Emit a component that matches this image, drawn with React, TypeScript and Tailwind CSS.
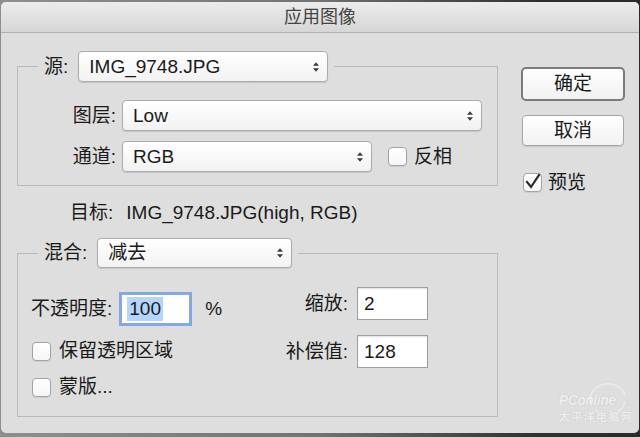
import React from "react";

function Arrows() {
  return (
    <svg width="8" height="12" viewBox="0 0 8 12" className="shrink-0">
      <path d="M4 1.2 L7 4.8 H1 Z M4 10.8 L7 7.2 H1 Z" fill="#3b3b3b" />
    </svg>
  );
}

function Popup({ size, text }: { size: string; text: string }) {
  return (
    <div
      className={`${size} flex items-center justify-between rounded-[4px] border border-[#ababab] bg-gradient-to-b from-[#ffffff] to-[#f2f2f2] pl-[10px] pr-[7px] text-[19px] leading-[22px] text-[#1a1a1a] shadow-[0_1px_1px_rgba(0,0,0,0.12)]`}
    >
      <span>{text}</span>
      <Arrows />
    </div>
  );
}

function CheckBox({ checked }: { checked?: boolean }) {
  return (
    <div className="relative flex h-[19px] w-[19px] shrink-0 items-center justify-center rounded-[4px] border border-[#a3a3a3] bg-gradient-to-b from-[#ffffff] to-[#f6f6f6] shadow-[0_1px_1px_rgba(0,0,0,0.08)]">
      {checked && (
        <svg width="19" height="19" viewBox="0 0 19 19" className="absolute left-[-1px] top-[-2px]">
          <path d="M4 10 L8 15 L16 3" stroke="#2a2a2a" strokeWidth="2.2" fill="none" strokeLinecap="square" strokeLinejoin="miter" />
        </svg>
      )}
    </div>
  );
}

function Field({ text }: { text: string }) {
  return (
    <div className="flex h-[33px] w-[71px] items-center border border-[#9d9d9d] bg-white pl-[6px] text-[19px] leading-[22px] text-[#1a1a1a] shadow-[inset_0_1px_1px_rgba(0,0,0,0.12)]">
      {text}
    </div>
  );
}

export default function App() {
  return (
    <div className="h-[437px] w-[640px] overflow-hidden bg-[linear-gradient(90deg,#8e8e8e_0%,#727272_50%,#303030_84%,#2a2a2a_100%)] pl-[1px] pt-[2px] font-['Liberation_Sans','Noto_Sans_CJK_SC',sans-serif] text-[#1a1a1a]">
      <div className="relative flex h-[431px] w-[638px] flex-col overflow-hidden rounded-[5px] bg-[#dedede]">
        {/* title bar */}
        <div className="flex h-[31px] shrink-0 items-center justify-center border-b border-[#b2b2b2] bg-gradient-to-b from-[#ececec] to-[#d6d6d6] text-[18px] leading-[22px] text-[#444444]">
          应用图像
        </div>

        <div className="flex">
          {/* left column */}
          <div className="w-[497px] shrink-0 pl-[16px] pt-[18px]">
            <fieldset className="w-[481px] border border-[#b9b9b9] pb-[13px]">
              <legend className="ml-[20px] px-[6px]">
                <div className="flex items-center gap-[10px] text-[19px] leading-[22px]">
                  <span>源:</span>
                  <Popup size="h-[31px] w-[250px]" text="IMG_9748.JPG" />
                </div>
              </legend>
              <div className="mt-[18px] flex flex-col gap-[10px] text-[19px] leading-[22px]">
                <div className="flex items-center gap-[6px]">
                  <span className="w-[98px] text-right">图层:</span>
                  <Popup size="h-[31px] w-[360px]" text="Low" />
                </div>
                <div className="flex items-center gap-[6px]">
                  <span className="w-[98px] text-right">通道:</span>
                  <Popup size="h-[31px] w-[250px]" text="RGB" />
                  <div className="ml-[10px] flex items-center gap-[7px]">
                    <CheckBox />
                    <span>反相</span>
                  </div>
                </div>
              </div>
            </fieldset>

            <div className="ml-[53px] mt-[15px] flex text-[19px] leading-[24px]">
              <span>目标:</span>
              <span className="ml-[13px]">IMG_9748.JPG(high, RGB)</span>
            </div>

            <fieldset className="mt-[13px] w-[481px] border border-[#b9b9b9] pb-[19px]">
              <legend className="ml-[20px] px-[6px]">
                <div className="flex items-center gap-[10px] text-[19px] leading-[22px]">
                  <span>混合:</span>
                  <Popup size="h-[30px] w-[195px]" text="减去" />
                </div>
              </legend>
              <div className="flex items-start pl-[13px] text-[19px] leading-[20px]">
                <div className="flex w-[247px] flex-col">
                  <div className="mt-[26px] flex h-[30px] items-center">
                    <span>不透明度:</span>
                    <div className="ml-[9px] flex h-[30px] w-[69px] items-center border border-[#8fa9d6] bg-white pl-[5px] shadow-[0_0_0_2px_#7fa7eb]">
                      <span className="bg-[#b4d6fe] px-[2px] leading-[24px]">100</span>
                    </div>
                    <span className="ml-[15px]">%</span>
                  </div>
                  <div className="mt-[17px] flex h-[20px] items-center gap-[8px] pl-[1px]">
                    <CheckBox />
                    <span>保留透明区域</span>
                  </div>
                  <div className="mt-[16px] flex h-[20px] items-center gap-[8px] pl-[1px]">
                    <CheckBox />
                    <span>蒙版...</span>
                  </div>
                </div>
                <div className="mt-[19px] flex flex-col gap-[15px]">
                  <div className="flex items-center gap-[9px]">
                    <span className="w-[70px] text-right">缩放:</span>
                    <Field text="2" />
                  </div>
                  <div className="flex items-center gap-[9px]">
                    <span className="w-[70px] text-right">补偿值:</span>
                    <Field text="128" />
                  </div>
                </div>
              </div>
            </fieldset>
          </div>

          {/* right column */}
          <div className="ml-[23px] flex flex-col pt-[34px] text-[19px] leading-[22px]">
            <div className="flex h-[34px] w-[104px] items-center justify-center rounded-[5px] border-2 border-[#7b7b7b] bg-gradient-to-b from-[#ffffff] to-[#f1f1f1]">
              确定
            </div>
            <div className="ml-[1px] mt-[14px] flex h-[31px] w-[102px] items-center justify-center rounded-[4px] border border-[#a6a6a6] bg-gradient-to-b from-[#ffffff] to-[#f1f1f1] shadow-[0_1px_1px_rgba(0,0,0,0.1)]">
              取消
            </div>
            <div className="ml-[2px] mt-[27px] flex h-[19px] items-center gap-[6px]">
              <CheckBox checked />
              <span>预览</span>
            </div>
          </div>
        </div>

        {/* watermark */}
        <div className="pointer-events-none absolute bottom-[10px] right-[5px] flex flex-col items-start whitespace-nowrap text-white opacity-75">
          <svg width="40" height="30" viewBox="0 0 40 30" className="absolute right-[6px] top-[-12px]">
            <path d="M3 22 A17 15 0 0 1 37 13" stroke="#f4f4f4" strokeWidth="1.4" fill="none" />
            <path d="M7 27 A17 15 0 0 0 37 19" stroke="#f4f4f4" strokeWidth="1.1" fill="none" />
          </svg>
          <span className="text-[14px] font-bold italic leading-[13px] tracking-[-0.5px] text-[#f5f5f5] [text-shadow:0_0_1px_#aaaaaa]">
            PConline<span className="ml-[1px] text-[6px] font-normal not-italic">.com.cn</span>
          </span>
          <span className="mt-[2px] text-[11px] font-bold leading-[11px] tracking-[1.4px] text-[#f5f5f5] [text-shadow:0_0_1px_#aaaaaa]">
            太平洋电脑网
          </span>
        </div>
      </div>
    </div>
  );
}
